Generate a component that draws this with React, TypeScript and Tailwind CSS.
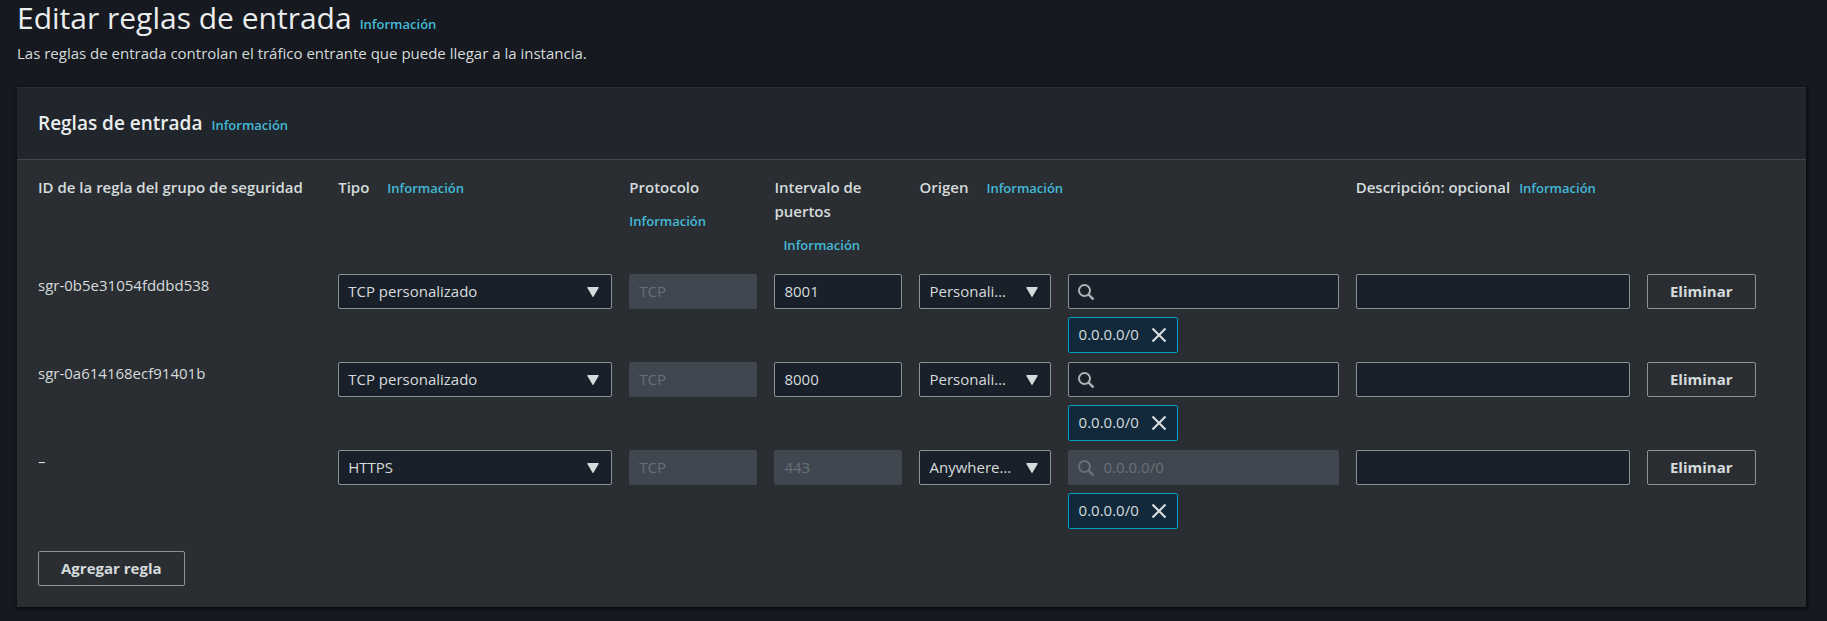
import React from "react";

const ROW =
  "grid grid-cols-[283fr_274fr_128fr_128fr_419fr_274fr_138fr] gap-x-[17px]";
const FIELD =
  "h-[35px] w-full min-w-0 rounded-[2px] border px-[9px] pb-[2px] outline-none text-[15px] leading-6 focus:border-[#00a1c9]";
const ENABLED = "border-[#879596] bg-[#1a2029] text-[#d5dbdb]";
const DISABLED =
  "border-[#414750] bg-[#414750] text-[#687078] placeholder:text-[#687078]";
const BUTTON =
  "h-[35px] rounded-[2px] border border-[#879596] px-[22px] pb-[2px] text-[15px] leading-6 font-bold whitespace-nowrap text-[#d5dbdb] hover:bg-[#21252c]";

type Rule = {
  id: string;
  type: string;
  protocol: string;
  port: string;
  portLocked?: boolean;
  source: string;
  cidr: string;
  cidrLocked?: boolean;
};

const RULES: Rule[] = [
  { id: "sgr-0b5e31054fddbd538", type: "TCP personalizado", protocol: "TCP", port: "8001", source: "Personalizado", cidr: "0.0.0.0/0" },
  { id: "sgr-0a614168ecf91401b", type: "TCP personalizado", protocol: "TCP", port: "8000", source: "Personalizado", cidr: "0.0.0.0/0" },
  { id: "–", type: "HTTPS", protocol: "TCP", port: "443", portLocked: true, source: "Anywhere-IPv4", cidr: "0.0.0.0/0", cidrLocked: true },
];

function InfoLink({ className = "" }: { className?: string }) {
  return (
    <a href="#info" className={`text-[13px] leading-6 font-semibold text-[#44b9d6] hover:underline ${className}`}>
      Información
    </a>
  );
}

function HeaderCell({ label, gap = "gap-x-[18px]", linkClass }: { label: string; gap?: string; linkClass?: string }) {
  return (
    <th scope="col" className="min-w-0 text-left font-semibold">
      <div className={`flex flex-wrap items-baseline gap-y-[10px] ${gap}`}>
        <span>{label}</span>
        <InfoLink className={linkClass} />
      </div>
    </th>
  );
}

function Select({ label, value, options }: { label: string; value: string; options: string[] }) {
  return (
    <div className="relative min-w-0">
      <select
        aria-label={label}
        defaultValue={value}
        className={`${FIELD} ${ENABLED} block appearance-none truncate pr-[38px]`}
      >
        {options.map((o) => (
          <option key={o}>{o}</option>
        ))}
      </select>
      <svg
        viewBox="0 0 12 10"
        className="pointer-events-none absolute top-[13px] right-[13px] h-[10px] w-[12px] fill-[#d5dbdb]"
        aria-hidden="true"
      >
        <path d="M1 0h10a.7.7 0 0 1 .6 1L6.6 9.6a.7.7 0 0 1-1.2 0L.4 1A.7.7 0 0 1 1 0Z" />
      </svg>
    </div>
  );
}

function SearchIcon({ dim }: { dim?: boolean }) {
  return (
    <svg
      viewBox="0 0 16 16"
      className={`pointer-events-none absolute top-[10px] left-[10px] size-4 fill-none ${dim ? "stroke-[#687078]" : "stroke-[#aab7b8]"}`}
      strokeWidth="2"
      aria-hidden="true"
    >
      <circle cx="6.5" cy="6.5" r="5.5" />
      <path d="M10.5 10.5 15.5 15.5" strokeWidth="2.4" />
    </svg>
  );
}

function RuleRow({ rule }: { rule: Rule }) {
  return (
    <tr className={`${ROW} pb-[9px]`}>
      <td className="min-w-0 leading-[22px]">{rule.id}</td>
      <td className="min-w-0">
        <Select label="Tipo" value={rule.type} options={["TCP personalizado", "HTTPS"]} />
      </td>
      <td className="min-w-0">
        <input aria-label="Protocolo" disabled value={rule.protocol} className={`${FIELD} ${DISABLED}`} />
      </td>
      <td className="min-w-0">
        <input
          aria-label="Intervalo de puertos"
          disabled={rule.portLocked}
          defaultValue={rule.port}
          className={`${FIELD} ${rule.portLocked ? DISABLED : ENABLED}`}
        />
      </td>
      <td className="grid min-w-0 grid-cols-[131fr_271fr] gap-x-[17px]">
        <Select label="Origen" value={rule.source} options={["Personalizado", "Anywhere-IPv4"]} />
        <div className="flex min-w-0 flex-col items-start gap-2">
          <div className="relative w-full">
            <input
              type="text"
              aria-label="Buscar origen"
              disabled={rule.cidrLocked}
              placeholder={rule.cidrLocked ? rule.cidr : ""}
              className={`${FIELD} ${rule.cidrLocked ? DISABLED : ENABLED} block pl-[35px]`}
            />
            <SearchIcon dim={rule.cidrLocked} />
          </div>
          <div className="flex h-9 items-center gap-3 rounded-[2px] border border-[#00a1c9] bg-[#12293b] px-[10px]">
            <span className="pb-[2px]">{rule.cidr}</span>
            <button type="button" aria-label={`Quitar ${rule.cidr}`}>
              <svg viewBox="0 0 16 16" className="size-4 fill-none stroke-[#d5dbdb]" strokeWidth="2.2" aria-hidden="true">
                <path d="M1.5 1.5 14.5 14.5M14.5 1.5 1.5 14.5" />
              </svg>
            </button>
          </div>
        </div>
      </td>
      <td className="min-w-0">
        <input type="text" aria-label="Descripción" className={`${FIELD} ${ENABLED}`} />
      </td>
      <td className="min-w-0">
        <button type="button" className={BUTTON}>
          Eliminar
        </button>
      </td>
    </tr>
  );
}

export default function App() {
  return (
    <main className="min-h-screen bg-[#16191f] pr-[21px] pb-[14px] pl-[17px] font-['Open_Sans','Noto_Sans',sans-serif] text-[15px] leading-6 text-[#d5dbdb]">
      <header className="pb-[22px]">
        <div className="flex items-baseline gap-2">
          <h1 className="text-[30px] leading-9 text-[#eaeded]">Editar reglas de entrada</h1>
          <InfoLink />
        </div>
        <p className="pt-[5px]">Las reglas de entrada controlan el tráfico entrante que puede llegar a la instancia.</p>
      </header>

      <section className="border-t border-[#2a2e33] bg-[#2a2e33] shadow-[1px_1px_3px_1px_#0008]">
        <div className="flex items-baseline gap-[9px] border-b border-[#414750] bg-[#21252c] px-[21px] pt-[23px] pb-[22px]">
          <h2 className="text-[19px] leading-6 font-semibold text-[#eaeded]">Reglas de entrada</h2>
          <InfoLink />
        </div>
        <div className="px-[21px] pt-[15px] pb-[21px]">
          <table className="block">
            <thead className="block pb-[17px]">
              <tr className={ROW}>
                <th scope="col" className="text-left font-semibold whitespace-nowrap">
                  ID de la regla del grupo de seguridad
                </th>
                <HeaderCell label="Tipo" />
                <HeaderCell label="Protocolo" />
                <HeaderCell label="Intervalo de puertos" linkClass="ml-[9px]" />
                <HeaderCell label="Origen" />
                <HeaderCell label="Descripción: opcional" gap="gap-x-[9px]" />
                <td />
              </tr>
            </thead>
            <tbody className="block">
              {RULES.map((r) => (
                <RuleRow key={r.id} rule={r} />
              ))}
            </tbody>
          </table>
          <button type="button" className={`${BUTTON} mt-[13px]`}>
            Agregar regla
          </button>
        </div>
      </section>
    </main>
  );
}
